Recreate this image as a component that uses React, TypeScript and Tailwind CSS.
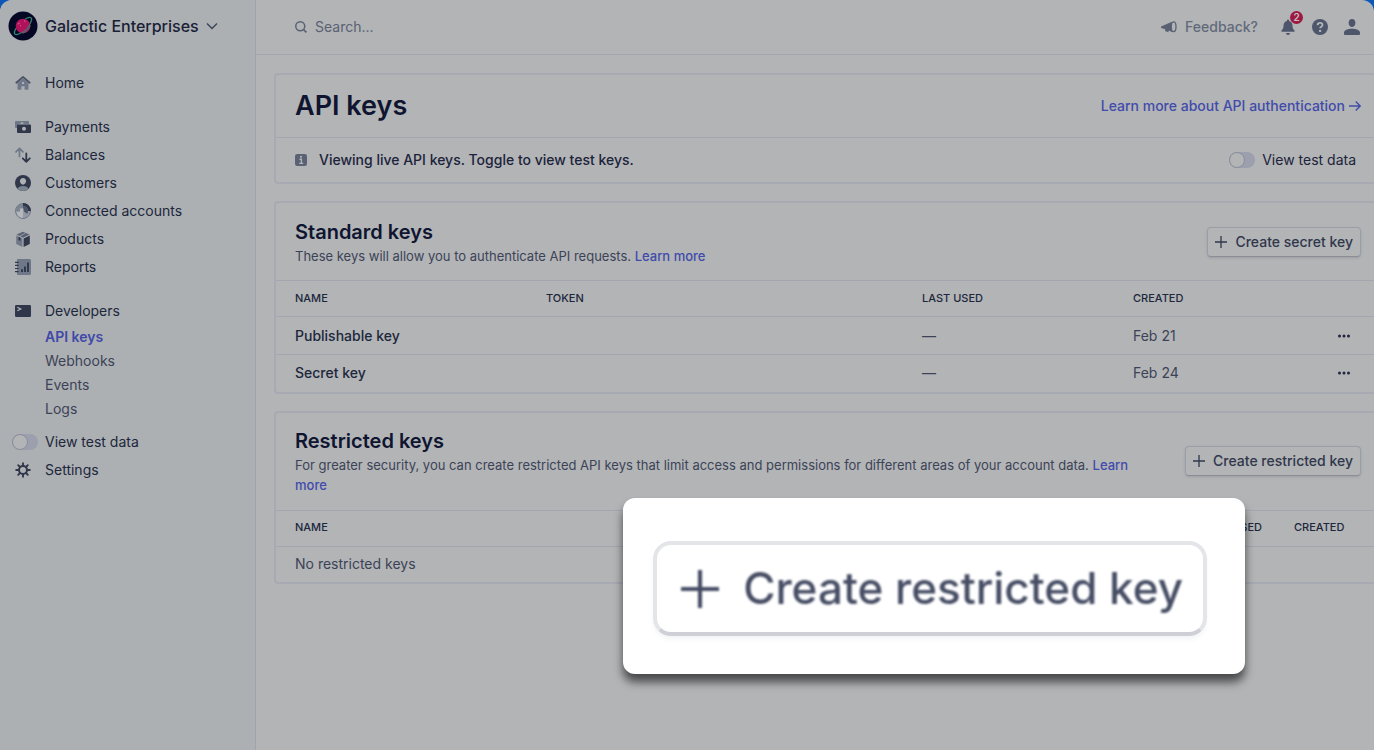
import type { ReactNode } from "react";

const DARK = "#30374b";
const MID = "#6f7888";

function Icon({ children, className = "size-4" }: { children: ReactNode; className?: string }) {
  return (
    <svg viewBox="0 0 16 16" fill="none" aria-hidden="true" className={`shrink-0 ${className}`}>
      {children}
    </svg>
  );
}

const icons = {
  home: (
    <Icon>
      <path d="M2.5 8 8 3.2 13.5 8v6a.8.8 0 0 1-.8.8H9.6v-3.6H6.4v3.6H3.300a.8.8 0 0 1-.8-.8Z" fill={MID} />
      <path d="M1.300 7.700 8 1.900l6.700 5.800" stroke="#4b5366" strokeWidth="1.800" strokeLinecap="round" strokeLinejoin="round" />
      <rect x="7" y="7" width="2" height="2" fill="#adb1b4" />
    </Icon>
  ),
  payments: (
    <Icon>
      <path d="M.8 2h12.400c.4 0 .8.4.8.8V5H4.500C3 5 3 6 3 6.500V9H.8a.8.8 0 0 1-.8-.8V2.800C0 2.400.4 2 .8 2Z" fill={MID} />
      <circle cx="7" cy="4.500" r="1.500" fill="#a2a8ae" />
      <path fillRule="evenodd" d="M3 5.500h12a1 1 0 0 1 1 1V13a1 1 0 0 1-1 1H3a1 1 0 0 1-1-1V6.500a1 1 0 0 1 1-1Zm6 2.200a2 2 0 1 0 0 4 2 2 0 0 0 0-4Z" fill={DARK} />
    </Icon>
  ),
  balances: (
    <Icon>
      <path d="M4.500 9.500V1.500M1 4.800l3.500-3.500L8 4.800" stroke={MID} strokeWidth="1.700" strokeLinecap="round" strokeLinejoin="round" />
      <path d="M11.300 6.500v8M7.800 11.300l3.500 3.500 3.500-3.500" stroke={DARK} strokeWidth="1.800" strokeLinecap="round" strokeLinejoin="round" />
    </Icon>
  ),
  customers: (
    <Icon>
      <circle cx="8" cy="8" r="8" fill={DARK} />
      <path d="M2.500 13.700C3.500 11.500 6 10.900 8 10.900s4.500.6 5.500 2.800A8 8 0 0 1 8 16a8 8 0 0 1-5.500-2.300Z" fill="#7b8491" />
      <path d="M8 2.900c1.900 0 3.100 1.400 3.100 3.200S9.700 9.700 8 9.700 4.900 7.900 4.900 6.100 6.100 2.900 8 2.900Z" fill="#adb1b4" />
    </Icon>
  ),
  accounts: (
    <Icon>
      <circle cx="8" cy="8" r="7.500" fill="#9299a3" stroke={MID} />
      <path d="M8 0a8 8 0 0 1 8 8h-3A5 5 0 0 0 8 3Z" fill={DARK} />
      <path d="M8 3a5 5 0 0 1 5 5 5 5 0 0 1-.8 2.800L8 8Z" fill="#4d5569" />
      <path d="M8 1v4.500H5V8H1a7 7 0 0 1 7-7Z" fill="#7b8491" />
      <path d="M5 5.500h3.500V9H5zM1.500 9H8v6A7 7 0 0 1 1.500 9Z" fill="#b4b8bb" />
    </Icon>
  ),
  products: (
    <Icon>
      <path d="m8 .7 6.500 2.900L8 6.800 1.500 3.600Z" fill="#596173" />
      <path d="m1.200 4.500 6.200 3V16l-5.600-2.700a1 1 0 0 1-.6-.9Z" fill={MID} />
      <path d="m14.800 4.500-6.200 3V16l5.600-2.700a1 1 0 0 0 .6-.9Z" fill={DARK} />
      <path d="m4.500 5.200 5.800-3" stroke="#adb1b4" strokeWidth=".7" />
      <path d="m3.500 5.700 2 1V10l-2-1Z" fill={DARK} />
    </Icon>
  ),
  reports: (
    <Icon>
      <path d="M3 0h11.500c.8 0 1.500.7 1.500 1.500v13c0 .8-.7 1.500-1.500 1.500H3c-.6 0-1-.4-1-1V1c0-.6.4-1 1-1Z" fill={MID} />
      <path d="M.4 3.300h2.800M.4 6.400h2.800M.4 9.500h2.800M.4 12.600h2.800" stroke={DARK} strokeWidth="1.200" strokeLinecap="round" />
      <path d="M7 10.200V13M10 7.500V13M13 3.500V13" stroke={DARK} strokeWidth="1.900" />
    </Icon>
  ),
  developers: (
    <Icon>
      <rect y="2" width="16" height="12" rx="1.200" fill={DARK} />
      <path d="m2.300 4.300 3.400 1.700-3.400 1.700" stroke="#b4b8bb" strokeWidth="1.200" />
    </Icon>
  ),
  settings: (
    <Icon>
      <circle cx="8" cy="8" r="4" stroke={DARK} strokeWidth="2" />
      <path d="M8 1.200v2.500M8 12.300v2.500M1.200 8h2.500M12.300 8h2.500M3.200 3.200 5 5M11 11l1.800 1.800M3.200 12.800 5 11M11 5l1.800-1.800" stroke={DARK} strokeWidth="1.900" strokeLinecap="round" />
    </Icon>
  ),
};

const mainLinks = [
  { label: "Payments", icon: icons.payments },
  { label: "Balances", icon: icons.balances },
  { label: "Customers", icon: icons.customers },
  { label: "Connected accounts", icon: icons.accounts },
  { label: "Products", icon: icons.products },
  { label: "Reports", icon: icons.reports },
];

const standardKeys = [
  { name: "Publishable key", created: "Feb 21" },
  { name: "Secret key", created: "Feb 24" },
];

function NavLink({ label, icon }: { label: string; icon: ReactNode }) {
  return (
    <a href="#" className="flex h-7 items-center gap-[14px] pl-[15px]">
      {icon}
      {label}
    </a>
  );
}

function Toggle() {
  return (
    <input
      type="checkbox"
      className="h-4 w-[26px] shrink-0 appearance-none rounded-full bg-[#9c9fae] before:block before:size-4 before:rounded-full before:border before:border-[#8b8e9b] before:bg-[#b2b4b6] checked:before:ml-[10px]"
    />
  );
}

function Plus({ className }: { className: string }) {
  return (
    <svg viewBox="0 0 12 12" className={`shrink-0 ${className}`} aria-hidden="true">
      <path d="M6 0v12M0 6h12" stroke="currentColor" strokeWidth="1.300" />
    </svg>
  );
}

function CreateButton({ children }: { children: ReactNode }) {
  return (
    <button className="flex h-[30px] shrink-0 items-center gap-2 rounded border border-[#9b9da8] border-b-[#8b8d99] px-[7px] font-medium whitespace-nowrap text-[#30374b] shadow-sm">
      <Plus className="size-3" />
      {children}
    </button>
  );
}

function Card({ children }: { children: ReactNode }) {
  return <section className="rounded-l border-2 border-r-0 border-[#a7a9b3]">{children}</section>;
}

function Planet() {
  return (
    <svg viewBox="0 0 30 30" className="size-[30px] shrink-0" aria-hidden="true">
      <circle cx="15" cy="15" r="14.500" fill="#050825" />
      <g transform="rotate(-45 15 15)">
        <ellipse cx="15" cy="15" rx="11.500" ry="4" fill="none" stroke="#35806e" strokeWidth="1.300" />
        <circle cx="15" cy="15" r="7.300" fill="#b0125c" />
        <path d="M8.500 18.300c4 2 9 2 13 0M9.500 19.900c3.500 1.400 7.500 1.400 11 0" fill="none" stroke="#35806e" strokeWidth=".9" />
      </g>
      <path d="m9.800 13.200 2-1.200M12 15l1-.600M16 9.800l1.500.5" stroke="#d26a93" strokeWidth="1" />
    </svg>
  );
}

function Sidebar() {
  return (
    <aside className="w-64 shrink-0 border-r border-[#a1a4ae] bg-[#acb0b3] text-[#20273c]">
      <button className="mt-[11px] ml-2 flex items-center gap-[7px] text-base font-medium text-[#1a2036]">
        <Planet />
        Galactic Enterprises
        <svg viewBox="0 0 12 8" className="w-3" fill="none" aria-hidden="true">
          <path d="m1 1.500 5 5 5-5" stroke="#3c4357" strokeWidth="1.400" />
        </svg>
      </button>
      <nav className="mt-7 flex flex-col gap-4">
        <NavLink label="Home" icon={icons.home} />
        <div>
          {mainLinks.map((link) => (
            <NavLink key={link.label} label={link.label} icon={link.icon} />
          ))}
        </div>
        <div>
          <NavLink label="Developers" icon={icons.developers} />
          <div className="flex flex-col pl-[45px] leading-6 text-[#3c4357]">
            <a href="#" className="font-semibold text-[#3f48a8]">API keys</a>
            <a href="#">Webhooks</a>
            <a href="#">Events</a>
            <a href="#">Logs</a>
          </div>
          <label className="mt-[7px] flex h-7 items-center gap-[7px] pl-3">
            <Toggle />
            View test data
          </label>
          <NavLink label="Settings" icon={icons.settings} />
        </div>
      </nav>
    </aside>
  );
}

function Topbar() {
  return (
    <header className="flex h-[55px] items-center border-b border-[#a3a5b0] pr-[14px] pl-[39px] text-[#596173]">
      <label className="flex flex-1 items-center gap-2">
        <Icon className="size-3">
          <circle cx="7" cy="7" r="6" stroke="currentColor" strokeWidth="2" />
          <path d="m11.500 11.500 3.700 3.700" stroke="currentColor" strokeWidth="2.200" />
        </Icon>
        <input type="text" aria-label="Search" placeholder="Search..." className="w-full outline-none placeholder:text-[#596173]" />
      </label>
      <button className="flex items-center gap-2 font-medium text-[#626a7a]">
        <Icon>
          <path d="M0 7.500 11 2.700v10.200L7.800 11.600l-.5 1.700-3.300-1.200.300-1.900L0 9Z" fill="#596173" />
          <ellipse cx="12.600" cy="7.800" rx="2.400" ry="4.900" stroke="#596173" strokeWidth="1.300" fill="#b2b4b6" />
        </Icon>
        Feedback?
      </button>
      <div className="ml-[22px] flex gap-4">
        <button aria-label="Notifications" className="relative">
          <Icon>
            <path d="M8 .5c.6 0 1 .4 1 1v.4c2.200.5 3.500 2.300 3.500 4.600 0 2.500.6 3.800 2 5 .4.4.2 1.200-.4 1.200H1.900c-.6 0-.8-.8-.4-1.200 1.400-1.200 2-2.500 2-5C3.500 4.200 4.800 2.400 7 1.900v-.4c0-.6.4-1 1-1ZM6 14h4a2 2 0 0 1-4 0Z" fill="#4d566a" />
          </Icon>
          <span className="absolute -top-2 left-[10px] flex size-[13px] items-center justify-center rounded-full bg-[#9c1a42] text-[10px] font-semibold text-[#c9bcc2]">
            2
          </span>
        </button>
        <button aria-label="Help">
          <Icon>
            <circle cx="8" cy="8" r="8" fill="#4d566a" />
            <path d="M5.600 6.200c0-1.400 1-2.300 2.400-2.300s2.500.9 2.500 2.100c0 1.700-2.400 1.700-2.400 3.300" stroke="#b2b4b6" strokeWidth="1.800" />
            <circle cx="8.100" cy="11.900" r="1.200" fill="#b2b4b6" />
          </Icon>
        </button>
        <button aria-label="Account">
          <Icon>
            <path d="M8 0c2 0 3.400 1.500 3.400 3.700C11.400 6 9.900 8 8 8S4.600 6 4.600 3.700C4.600 1.500 6 0 8 0ZM0 13.500C0 11 4 9.700 8 9.700s8 1.300 8 3.800v1.200c0 .7-.5 1.300-1.200 1.300H1.200C.5 16 0 15.400 0 14.700Z" fill="#4d566a" />
          </Icon>
        </button>
      </div>
    </header>
  );
}

function Heading() {
  return (
    <Card>
      <div className="flex h-[62px] items-center justify-between pr-[13px] pl-[19px]">
        <h1 className="text-[27px] font-semibold text-[#0f1530]">API keys</h1>
        <a href="#" className="flex items-center gap-1 font-medium text-[#414bab]">
          Learn more about API authentication
          <Icon className="size-3">
            <path d="M0 8h15M9 2l6 6-6 6" stroke="currentColor" strokeWidth="1.800" />
          </Icon>
        </a>
      </div>
      <div className="flex h-[45px] items-center border-t border-[#a3a5b0] pr-[18px] pl-[19px] text-[#1c233a]">
        <Icon className="mr-3 size-3">
          <rect width="16" height="16" rx="3" fill="#596173" />
          <path d="M6 7h2.500v5.500M5.500 12.500h5.500" stroke="#b2b4b6" strokeWidth="1.800" />
          <circle cx="8" cy="3.800" r="1.400" fill="#b2b4b6" />
        </Icon>
        <p className="flex-1 font-medium">Viewing live API keys. Toggle to view test keys.</p>
        <label className="flex items-center gap-[7px]">
          <Toggle />
          View test data
        </label>
      </div>
    </Card>
  );
}

function CardHeader({ title, text, action, className }: { title: string; text: string; action: string; className: string }) {
  return (
    <div className={`flex items-center gap-8 pr-[13px] pl-[19px] ${className}`}>
      <div className="flex-1">
        <h2 className="text-xl leading-7 font-semibold text-[#0f1530]">{title}</h2>
        <p className="text-[13px] leading-5 text-[#3c4357]">
          {text}{" "}
          <a href="#" className="font-medium text-[#414bab]">Learn more</a>
        </p>
      </div>
      <CreateButton>{action}</CreateButton>
    </div>
  );
}

const headRow = "h-9 border-t border-[#a3a5b0] text-[11px] text-[#20273c]";
const bodyRow = "h-[38px] border-t border-[#a3a5b0] text-[#3c4357] last:h-[37px]";

function StandardKeys() {
  return (
    <Card>
      <CardHeader
        title="Standard keys"
        text="These keys will allow you to authenticate API requests."
        action="Create secret key"
        className="h-[77px]"
      />
      <table className="w-full table-fixed text-left">
        <thead>
          <tr className={headRow}>
            <th className="w-[270px] pl-[19px] font-medium">NAME</th>
            <th className="font-medium">TOKEN</th>
            <th className="w-[211px] font-medium">LAST USED</th>
            <th className="w-[181px] font-medium">CREATED</th>
            <th className="w-[60px]" aria-label="Actions" />
          </tr>
        </thead>
        <tbody>
          {standardKeys.map((key) => (
            <tr key={key.name} className={bodyRow}>
              <td className="pl-[19px] font-medium text-[#20273c]">{key.name}</td>
              <td />
              <td>—</td>
              <td>{key.created}</td>
              <td>
                <button aria-label={`Options for ${key.name}`} className="ml-6 block">
                  <Icon className="size-3">
                    <g fill="#20273c">
                      <circle cx="2" cy="8" r="2" />
                      <circle cx="8" cy="8" r="2" />
                      <circle cx="14" cy="8" r="2" />
                    </g>
                  </Icon>
                </button>
              </td>
            </tr>
          ))}
        </tbody>
      </table>
    </Card>
  );
}

function RestrictedKeys() {
  return (
    <Card>
      <CardHeader
        title="Restricted keys"
        text="For greater security, you can create restricted API keys that limit access and permissions for different areas of your account data."
        action="Create restricted key"
        className="h-[97px]"
      />
      <table className="w-full table-fixed text-left">
        <thead>
          <tr className={headRow}>
            <th className="pl-[19px] font-medium">NAME</th>
            <th className="w-[93px] font-medium">LAST USED</th>
            <th className="w-20 font-medium">CREATED</th>
          </tr>
        </thead>
        <tbody>
          <tr className="h-9 border-t border-[#a3a5b0] text-[#3c4357]">
            <td colSpan={3} className="pl-[19px]">No restricted keys</td>
          </tr>
        </tbody>
      </table>
    </Card>
  );
}

function Callout() {
  return (
    <div className="absolute top-[498px] right-[129px] rounded-xl bg-white pt-[43px] pr-[38px] pb-[38px] pl-[30px] shadow-[0_8px_10px_rgb(0_0_0/0.6)]">
      <button className="flex h-[95px] items-center rounded-[18px] border-4 border-[#e4e5e9] border-b-[#cfd0d7] pr-5 pl-6 text-[44px] font-medium whitespace-nowrap text-[#464d64] shadow-md shadow-gray-100">
        <span className="flex items-center gap-6 blur-[1px]">
          <Plus className="size-[38px]" />
          Create restricted key
        </span>
      </button>
    </div>
  );
}

export default function App() {
  return (
    <div className="bg-[#0b57b8] font-[Inter,sans-serif] text-sm">
      <div className="relative flex min-h-screen overflow-hidden rounded-t-xl bg-[#b2b4b6]">
        <Sidebar />
        <div className="min-w-0 flex-1">
          <Topbar />
          <main className="flex flex-col gap-[17px] pt-[18px] pl-[18px]">
            <Heading />
            <StandardKeys />
            <RestrictedKeys />
          </main>
        </div>
        <Callout />
      </div>
    </div>
  );
}
